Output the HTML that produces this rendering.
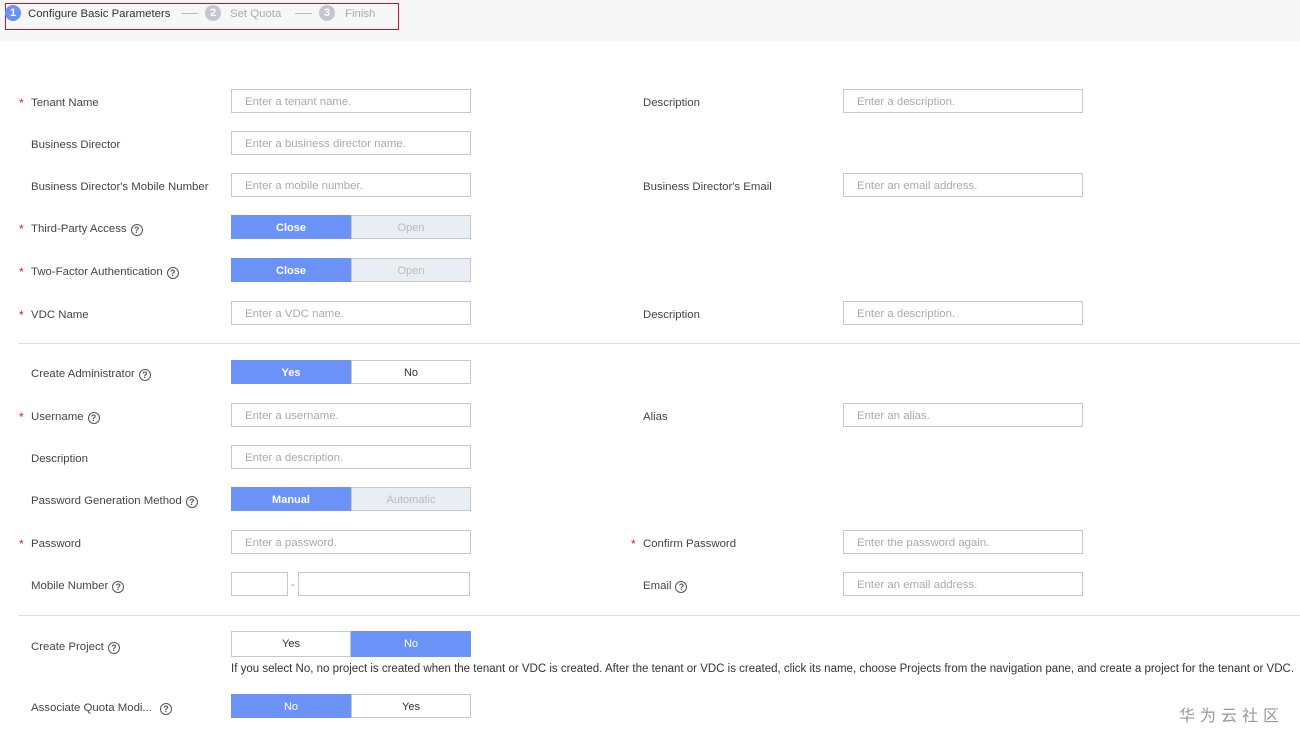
<!DOCTYPE html>
<html><head><style>
body{margin:0;width:1300px;height:737px;background:#fff;font-family:"Liberation Sans",sans-serif;font-size:11.4px;color:#333;position:relative;overflow:hidden}
.top{position:absolute;left:0;top:0;width:1300px;height:41px;background:#f7f7f8}
.box{position:absolute;left:5px;top:3px;width:392px;height:25px;border:1px solid #d0112b}
.a{position:absolute;white-space:nowrap}
.c{position:absolute;width:16px;height:16px;border-radius:50%;color:#fff;font-size:11px;text-align:center;line-height:16px;font-weight:bold}
.lbl{position:absolute;left:31px;white-space:nowrap;color:#444;margin-top:2px}
.st{position:absolute;left:19px;color:#e02020;font-size:12px;margin-top:1px}
.in{position:absolute;width:238px;height:22px;border:1px solid #c8c8c8;color:#aaa;line-height:24px;text-indent:13px;box-sizing:content-box}
.tg{position:absolute;left:231px;width:240px;height:24px;display:flex;font-size:11px}
.tg div{flex:1;text-align:center;line-height:24px;border:1px solid #c8c8c8}
.on{background:#6b92f7;color:#fff;font-weight:bold;border-color:#6b92f7!important}
.off{background:#e9eef4;color:#bbb}
.wh{background:#fff;color:#333}
.q{display:inline-block;width:10px;height:10px;border:1.3px solid #555;border-radius:50%;font-size:9px;line-height:10px;text-align:center;font-weight:bold;margin-left:4px;vertical-align:-1px;color:#555}
.hr{position:absolute;left:18px;width:1282px;height:1px;background:#ddd}
</style></head><body>
<div class="top"></div><div class="box"></div>
<div class="c" style="left:5px;top:5px;background:#6b92f7">1</div>
<div class="a" style="left:28px;top:8px;color:#333">Configure Basic Parameters</div>
<div class="a" style="left:181px;top:13px;width:17px;height:1px;background:#bbb"></div>
<div class="c" style="left:205px;top:5px;background:#c3c6cc">2</div>
<div class="a" style="left:230px;top:8px;color:#aaa">Set Quota</div>
<div class="a" style="left:295px;top:13px;width:17px;height:1px;background:#bbb"></div>
<div class="c" style="left:319px;top:5px;background:#c3c6cc">3</div>
<div class="a" style="left:345px;top:8px;color:#aaa">Finish</div>

<span class="st" style="top:95px">*</span><div class="lbl" style="top:95px">Tenant Name</div>
<div class="in" style="left:231px;top:89px">Enter a tenant name.</div>
<div class="lbl" style="left:643px;top:95px">Description</div>
<div class="in" style="left:843px;top:89px">Enter a description.</div>

<div class="lbl" style="top:137px">Business Director</div>
<div class="in" style="left:231px;top:131px">Enter a business director name.</div>

<div class="lbl" style="top:179px">Business Director's Mobile Number</div>
<div class="in" style="left:231px;top:173px">Enter a mobile number.</div>
<div class="lbl" style="left:643px;top:179px">Business Director's Email</div>
<div class="in" style="left:843px;top:173px">Enter an email address.</div>

<span class="st" style="top:221px">*</span><div class="lbl" style="top:221px">Third-Party Access<span class="q">?</span></div>
<div class="tg" style="top:215px"><div class="on">Close</div><div class="off">Open</div></div>

<span class="st" style="top:264px">*</span><div class="lbl" style="top:264px">Two-Factor Authentication<span class="q">?</span></div>
<div class="tg" style="top:258px"><div class="on">Close</div><div class="off">Open</div></div>

<span class="st" style="top:307px">*</span><div class="lbl" style="top:307px">VDC Name</div>
<div class="in" style="left:231px;top:301px">Enter a VDC name.</div>
<div class="lbl" style="left:643px;top:307px">Description</div>
<div class="in" style="left:843px;top:301px">Enter a description.</div>

<div class="hr" style="top:343px"></div>

<div class="lbl" style="top:366px">Create Administrator<span class="q">?</span></div>
<div class="tg" style="top:360px"><div class="on">Yes</div><div class="wh">No</div></div>

<span class="st" style="top:409px">*</span><div class="lbl" style="top:409px">Username<span class="q">?</span></div>
<div class="in" style="left:231px;top:403px">Enter a username.</div>
<div class="lbl" style="left:643px;top:409px">Alias</div>
<div class="in" style="left:843px;top:403px">Enter an alias.</div>

<div class="lbl" style="top:451px">Description</div>
<div class="in" style="left:231px;top:445px">Enter a description.</div>

<div class="lbl" style="top:493px">Password Generation Method<span class="q">?</span></div>
<div class="tg" style="top:487px"><div class="on">Manual</div><div class="off">Automatic</div></div>

<span class="st" style="top:536px">*</span><div class="lbl" style="top:536px">Password</div>
<div class="in" style="left:231px;top:530px">Enter a password.</div>
<span class="st" style="left:631px;top:536px">*</span><div class="lbl" style="left:643px;top:536px">Confirm Password</div>
<div class="in" style="left:843px;top:530px">Enter the password again.</div>

<div class="lbl" style="top:578px">Mobile Number<span class="q">?</span></div>
<div class="in" style="left:231px;top:572px;width:55px"></div>
<div class="a" style="left:291px;top:579px;color:#888">-</div>
<div class="in" style="left:298px;top:572px;width:170px"></div>
<div class="lbl" style="left:643px;top:578px">Email<span class="q">?</span></div>
<div class="in" style="left:843px;top:572px">Enter an email address.</div>

<div class="hr" style="top:615px"></div>

<div class="lbl" style="top:639px">Create Project<span class="q">?</span></div>
<div class="tg" style="top:631px;height:26px"><div class="wh">Yes</div><div class="on" style="font-weight:normal">No</div></div>
<div class="a" style="left:231px;top:663px;color:#333;font-size:11.5px">If you select No, no project is created when the tenant or VDC is created. After the tenant or VDC is created, click its name, choose Projects from the navigation pane, and create a project for the tenant or VDC.</div>

<div class="lbl" style="top:700px">Associate Quota Modi...<span class="q" style="margin-left:8px">?</span></div>
<div class="tg" style="top:694px"><div class="on" style="font-weight:normal">No</div><div class="wh">Yes</div></div>

<div class="a" style="left:1179px;top:702px;font-size:16px;letter-spacing:5px;color:#999;font-family:'Noto Sans CJK SC',sans-serif">华为云社区</div>
</body></html>
